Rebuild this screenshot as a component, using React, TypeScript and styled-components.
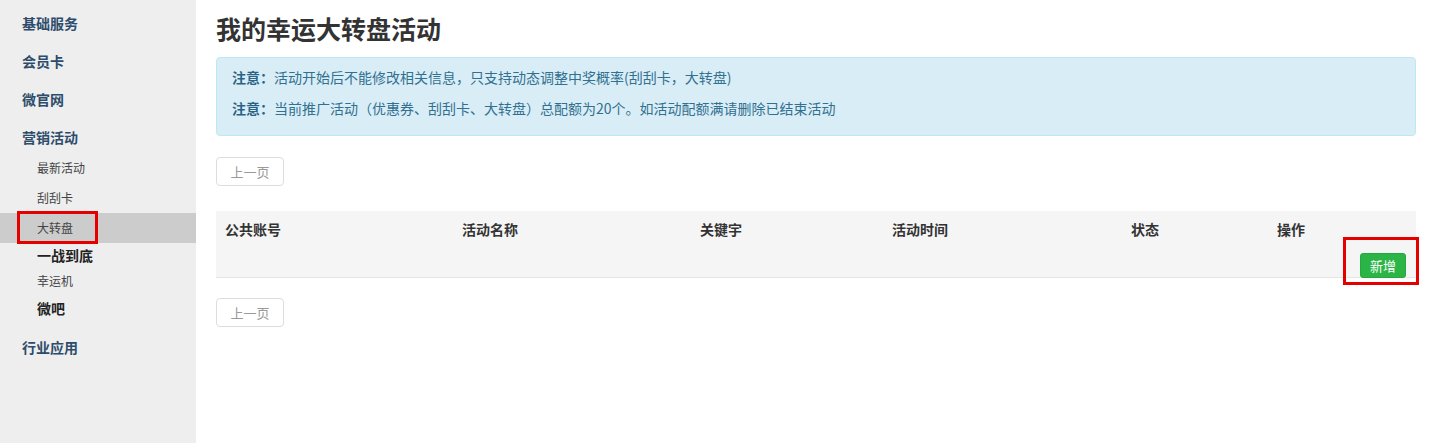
import React from "react";
import styled, { createGlobalStyle } from "styled-components";

const Global = createGlobalStyle`
  html, body { margin: 0; padding: 0; background: #fff; }
  body { font-family: "Noto Sans CJK SC", "Liberation Sans", sans-serif; color: #333; }
  * { box-sizing: border-box; }
`;

const Page = styled.div`
  display: flex;
  min-height: 100vh;
  width: 1432px;
`;

const Sidebar = styled.nav`
  width: 196px;
  flex: none;
  background: #eeeeee;
  padding-top: 4px;
`;

const NavItem = styled.div<{ $gap?: number }>`
  height: 38px;
  line-height: 38px;
  padding-left: 22px;
  font-size: 14px;
  font-weight: 700;
  color: #2d4c6b;
  margin-top: ${(p) => p.$gap ?? 0}px;
`;

const SubList = styled.div`
  display: flex;
  flex-direction: column;
  margin-top: -3px;
`;

const SubItem = styled.div<{ $h: number; $bold?: boolean; $active?: boolean }>`
  position: relative;
  height: ${(p) => p.$h}px;
  line-height: ${(p) => p.$h}px;
  padding-left: 37px;
  font-size: ${(p) => (p.$bold ? 14 : 12)}px;
  font-weight: ${(p) => (p.$bold ? 700 : 400)};
  color: ${(p) => (p.$bold ? "#222" : "#444")};
  background: ${(p) => (p.$active ? "#cccccc" : "transparent")};
`;

const Marker = styled.span<{ $l: number; $t: number; $w: number; $h: number }>`
  position: absolute;
  left: ${(p) => p.$l}px;
  top: ${(p) => p.$t}px;
  width: ${(p) => p.$w}px;
  height: ${(p) => p.$h}px;
  border: 3px solid #e50000;
  pointer-events: none;
`;

const Main = styled.main`
  flex: 1;
  padding: 0 16px 0 20px;
  display: flex;
  flex-direction: column;
  align-items: flex-start;
`;

const Title = styled.h1`
  margin: 0;
  padding-top: 14px;
  font-size: 25px;
  line-height: 28px;
  font-weight: 700;
  color: #333;
`;

const Alert = styled.div`
  align-self: stretch;
  margin-top: 15px;
  padding: 9px 15px 17px;
  background: #d9edf7;
  border: 1px solid #bce8f1;
  border-radius: 4px;
  color: #31708f;
  font-size: 14px;
  line-height: 20px;
`;

const AlertLine = styled.p`
  margin: 0;
  & + & { margin-top: 11px; }
`;

const Strong = styled.strong`
  font-weight: 700;
  color: #2a6385;
`;

const PagerButton = styled.button<{ $top: number }>`
  margin-top: ${(p) => p.$top}px;
  width: 68px;
  height: 29px;
  padding: 0;
  border: 1px solid #dddddd;
  border-radius: 4px;
  background: #fff;
  color: #999;
  font-family: inherit;
  font-size: 13px;
  line-height: 27px;
`;

const Table = styled.div`
  align-self: stretch;
  margin-top: 25px;
  background: #f5f5f5;
  border-bottom: 1px solid #e5e5e5;
  height: 67px;
  display: flex;
  flex-direction: column;
`;

const HeadRow = styled.div`
  display: grid;
  grid-template-columns: 237px 238px 192px 239px 146px 1fr;
  padding: 8px 0 0 9px;
  font-size: 14px;
  font-weight: 700;
  line-height: 20px;
  color: #333;
`;

const ActionRow = styled.div`
  display: flex;
  justify-content: flex-end;
  padding-right: 10px;
  margin-top: 13px;
`;

const AddWrap = styled.div`
  position: relative;
`;

const AddButton = styled.button`
  width: 46px;
  height: 25px;
  padding: 0;
  border: 1px solid #25a83f;
  border-radius: 3px;
  background: #2bb546;
  color: #fff;
  font-family: inherit;
  font-size: 13px;
  line-height: 23px;
`;

const subs = [
  { t: "最新活动", h: 30 },
  { t: "刮刮卡", h: 30 },
  { t: "大转盘", h: 30, active: true },
  { t: "一战到底", h: 24, bold: true },
  { t: "幸运机", h: 28 },
  { t: "微吧", h: 26, bold: true },
];

const cols = ["公共账号", "活动名称", "关键宇", "活动时间", "状态", "操作"];

export default function App() {
  return (
    <>
      <Global />
      <Page>
        <Sidebar>
          <NavItem>基础服务</NavItem>
          <NavItem>会员卡</NavItem>
          <NavItem>微官网</NavItem>
          <NavItem>营销活动</NavItem>
          <SubList>
            {subs.map((s) => (
              <SubItem key={s.t} $h={s.h} $bold={s.bold} $active={s.active}>
                {s.t}
                {s.active && <Marker $l={17} $t={-2} $w={81} $h={33} />}
              </SubItem>
            ))}
          </SubList>
          <NavItem $gap={7}>行业应用</NavItem>
        </Sidebar>
        <Main>
          <Title>我的幸运大转盘活动</Title>
          <Alert>
            <AlertLine>
              <Strong>注意：</Strong>活动开始后不能修改相关信息，只支持动态调整中奖概率(刮刮卡，大转盘)
            </AlertLine>
            <AlertLine>
              <Strong>注意：</Strong>当前推广活动（优惠券、刮刮卡、大转盘）总配额为20个。如活动配额满请删除已结束活动
            </AlertLine>
          </Alert>
          <PagerButton $top={21}>上一页</PagerButton>
          <Table>
            <HeadRow>
              {cols.map((c) => (
                <div key={c}>{c}</div>
              ))}
            </HeadRow>
            <ActionRow>
              <AddWrap>
                <AddButton>新增</AddButton>
                <Marker $l={-17} $t={-15} $w={76} $h={48} />
              </AddWrap>
            </ActionRow>
          </Table>
          <PagerButton $top={20}>上一页</PagerButton>
        </Main>
      </Page>
    </>
  );
}
